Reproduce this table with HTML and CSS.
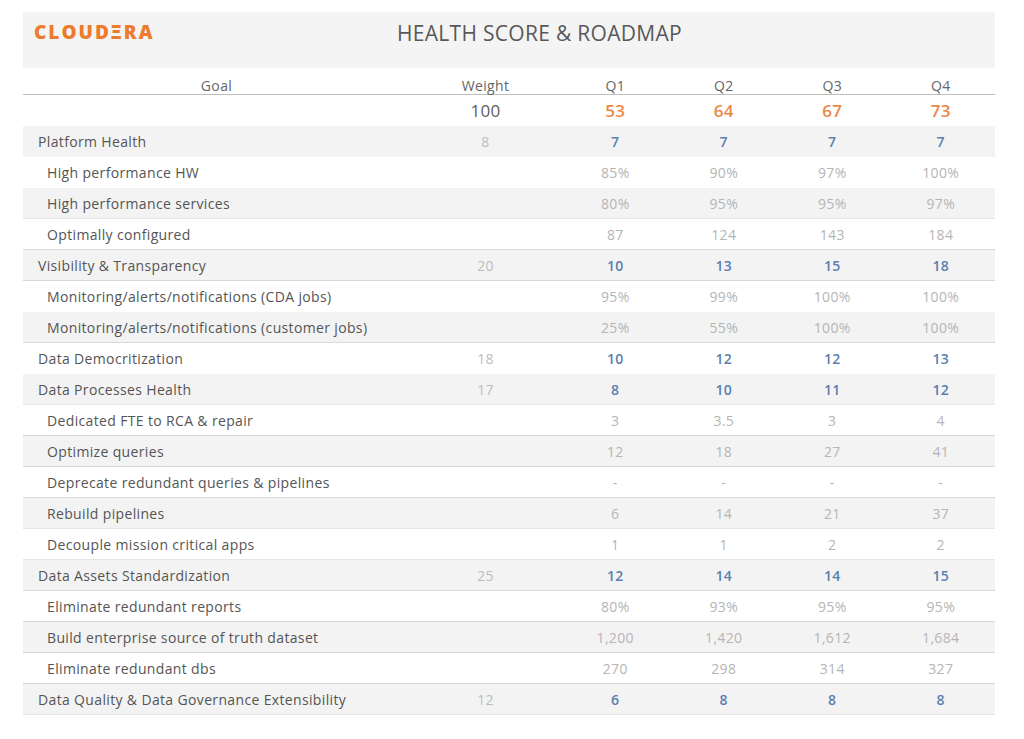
FILE: index.html
```html
<!DOCTYPE html>
<html lang="en">
<head>
<meta charset="utf-8">
<title>Health Score &amp; Roadmap</title>
<link rel="stylesheet" href="styles.css">
</head>
<body>
<div class="page">
  <header class="band">
    <div class="logo">CLOUD<span class="logo-e">Ξ</span>RA</div>
    <h1 class="title">HEALTH SCORE &amp; ROADMAP</h1>
  </header>
  <div class="table">
    <div class="row head">
      <div class="c goal">Goal</div><div class="c">Weight</div><div class="c">Q1</div><div class="c">Q2</div><div class="c">Q3</div><div class="c">Q4</div>
    </div>
    <div class="row total">
      <div class="c"></div><div class="c w">100</div><div class="c q">53</div><div class="c q">64</div><div class="c q">67</div><div class="c q">73</div>
    </div>

    <div class="row parent alt"><div class="c lab">Platform Health</div><div class="c w">8</div><div class="c v">7</div><div class="c v">7</div><div class="c v">7</div><div class="c v">7</div></div>
    <div class="row child"><div class="c lab">High performance HW</div><div class="c"></div><div class="c v">85%</div><div class="c v">90%</div><div class="c v">97%</div><div class="c v">100%</div></div>
    <div class="row child alt sep-faint"><div class="c lab">High performance services</div><div class="c"></div><div class="c v">80%</div><div class="c v">95%</div><div class="c v">95%</div><div class="c v">97%</div></div>
    <div class="row child sep"><div class="c lab">Optimally configured</div><div class="c"></div><div class="c v">87</div><div class="c v">124</div><div class="c v">143</div><div class="c v">184</div></div>
    <div class="row parent alt sep"><div class="c lab">Visibility &amp; Transparency</div><div class="c w">20</div><div class="c v">10</div><div class="c v">13</div><div class="c v">15</div><div class="c v">18</div></div>
    <div class="row child"><div class="c lab">Monitoring/alerts/notifications (CDA jobs)</div><div class="c"></div><div class="c v">95%</div><div class="c v">99%</div><div class="c v">100%</div><div class="c v">100%</div></div>
    <div class="row child alt sep"><div class="c lab">Monitoring/alerts/notifications (customer jobs)</div><div class="c"></div><div class="c v">25%</div><div class="c v">55%</div><div class="c v">100%</div><div class="c v">100%</div></div>
    <div class="row parent"><div class="c lab">Data Democritization</div><div class="c w">18</div><div class="c v">10</div><div class="c v">12</div><div class="c v">12</div><div class="c v">13</div></div>
    <div class="row parent alt sep-faint"><div class="c lab">Data Processes Health</div><div class="c w">17</div><div class="c v">8</div><div class="c v">10</div><div class="c v">11</div><div class="c v">12</div></div>
    <div class="row child sep"><div class="c lab">Dedicated FTE to RCA &amp; repair</div><div class="c"></div><div class="c v">3</div><div class="c v">3.5</div><div class="c v">3</div><div class="c v">4</div></div>
    <div class="row child alt sep"><div class="c lab">Optimize queries</div><div class="c"></div><div class="c v">12</div><div class="c v">18</div><div class="c v">27</div><div class="c v">41</div></div>
    <div class="row child sep"><div class="c lab">Deprecate redundant queries &amp; pipelines</div><div class="c"></div><div class="c v">-</div><div class="c v">-</div><div class="c v">-</div><div class="c v">-</div></div>
    <div class="row child alt sep-faint"><div class="c lab">Rebuild pipelines</div><div class="c"></div><div class="c v">6</div><div class="c v">14</div><div class="c v">21</div><div class="c v">37</div></div>
    <div class="row child sep-faint"><div class="c lab">Decouple mission critical apps</div><div class="c"></div><div class="c v">1</div><div class="c v">1</div><div class="c v">2</div><div class="c v">2</div></div>
    <div class="row parent alt sep"><div class="c lab">Data Assets Standardization</div><div class="c w">25</div><div class="c v">12</div><div class="c v">14</div><div class="c v">14</div><div class="c v">15</div></div>
    <div class="row child sep"><div class="c lab">Eliminate redundant reports</div><div class="c"></div><div class="c v">80%</div><div class="c v">93%</div><div class="c v">95%</div><div class="c v">95%</div></div>
    <div class="row child alt sep"><div class="c lab">Build enterprise source of truth dataset</div><div class="c"></div><div class="c v">1,200</div><div class="c v">1,420</div><div class="c v">1,612</div><div class="c v">1,684</div></div>
    <div class="row child sep"><div class="c lab">Eliminate redundant dbs</div><div class="c"></div><div class="c v">270</div><div class="c v">298</div><div class="c v">314</div><div class="c v">327</div></div>
    <div class="row parent alt sep-faint"><div class="c lab">Data Quality &amp; Data Governance Extensibility</div><div class="c w">12</div><div class="c v">6</div><div class="c v">8</div><div class="c v">8</div><div class="c v">8</div></div>
  </div>
</div>
</body>
</html>
```

FILE: styles.css
```css
html, body {
  margin: 0;
  padding: 0;
  background: #ffffff;
}

body {
  font-family: "Open Sans", "Noto Sans", "Liberation Sans", sans-serif;
  color: #555555;
}

.page {
  width: 972px;
  margin: 12px 0 0 23px;
}

.band {
  height: 56px;
  background: #f4f4f4;
  display: flex;
  align-items: flex-start;
  padding: 0 0 0 11px;
  box-sizing: border-box;
}

.logo {
  margin-top: 9px;
  font-family: "Open Sans", "DejaVu Sans", sans-serif;
  font-weight: 800;
  font-size: 19px;
  letter-spacing: 2px;
  color: #ec7b2d;
  line-height: 22px;
  width: 122px;
  white-space: nowrap;
}

.logo-e {
  display: inline-block;
}

.title {
  margin: 7px 0 0 241px;
  font-size: 21px;
  font-weight: 400;
  color: #595959;
  line-height: 28px;
  letter-spacing: 0.3px;
  white-space: nowrap;
}

.table {
  display: flex;
  flex-direction: column;
}

.row {
  display: grid;
  grid-template-columns: 387px 151px repeat(4, 1fr);
  align-items: center;
  height: 31px;
  box-sizing: border-box;
  border-bottom: 1px solid transparent;
  font-size: 14px;
  letter-spacing: 0.35px;
}

.row .c {
  text-align: center;
  line-height: 19px;
}

.row.head {
  height: 27px;
  align-items: end;
  border-bottom: 1px solid #bdbdbd;
}

.row.head .c {
  color: #666666;
  font-size: 14px;
  line-height: 16px;
}

.row.total {
  height: 31px;
}

.row.total .w {
  font-size: 17px;
  color: #5e5e5e;
}

.row.total .q {
  font-size: 17px;
  font-weight: 600;
  color: #ea8844;
}

.row.alt {
  background: #f3f3f3;
}

.row.sep {
  border-bottom-color: #d9d9d9;
}

.row.sep-faint {
  border-bottom-color: #e6e6e6;
}

.row .lab {
  text-align: left;
  color: #555555;
  white-space: nowrap;
}

.row.parent .lab {
  padding-left: 15px;
}

.row.child .lab {
  padding-left: 24px;
}

.row .w {
  color: #bdbdbd;
}

.row.parent .v {
  color: #5a7fb0;
  font-weight: 600;
}

.row.child .v {
  color: #b5b5b5;
}
```
